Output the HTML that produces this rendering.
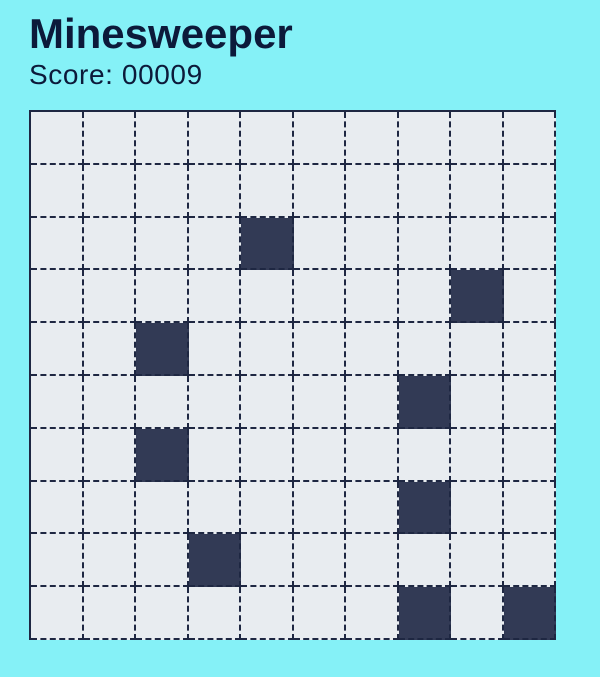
<!DOCTYPE html>
<html><head><style>
html,body{margin:0;padding:0}
body{width:600px;height:677px;background:#85f1f7;font-family:"Liberation Sans",sans-serif;color:#0c1a3a;position:relative;overflow:hidden}
h1{position:absolute;left:29px;top:10px;margin:0;font-size:42px;line-height:48px;font-weight:bold}
.s{position:absolute;left:29px;top:59px;font-size:28px;line-height:32px;letter-spacing:0.6px}
.g{position:absolute;left:29px;top:110px;width:525px;height:528px;border:2px solid #1e2742;border-right:none;border-bottom:none;display:grid;grid-template-columns:repeat(10,1fr);grid-template-rows:repeat(10,1fr);background:#e8ecf0}
.g div{border-right:2px dashed #1e2742;border-bottom:2px dashed #1e2742;background:#e8ecf0}
.g div.d{background:#323a55}
</style></head><body>
<h1>Minesweeper</h1>
<div class="s">Score: 00009</div>
<div class="g" id="g"></div>
<script>
var d={"2,4":1,"3,8":1,"4,2":1,"5,7":1,"6,2":1,"7,7":1,"8,3":1,"9,7":1,"9,9":1};
var g=document.getElementById('g'),h='';
for(var r=0;r<10;r++)for(var c=0;c<10;c++)h+='<div'+(d[r+','+c]?' class="d"':'')+'></div>';
g.innerHTML=h;
</script>
</body></html>
